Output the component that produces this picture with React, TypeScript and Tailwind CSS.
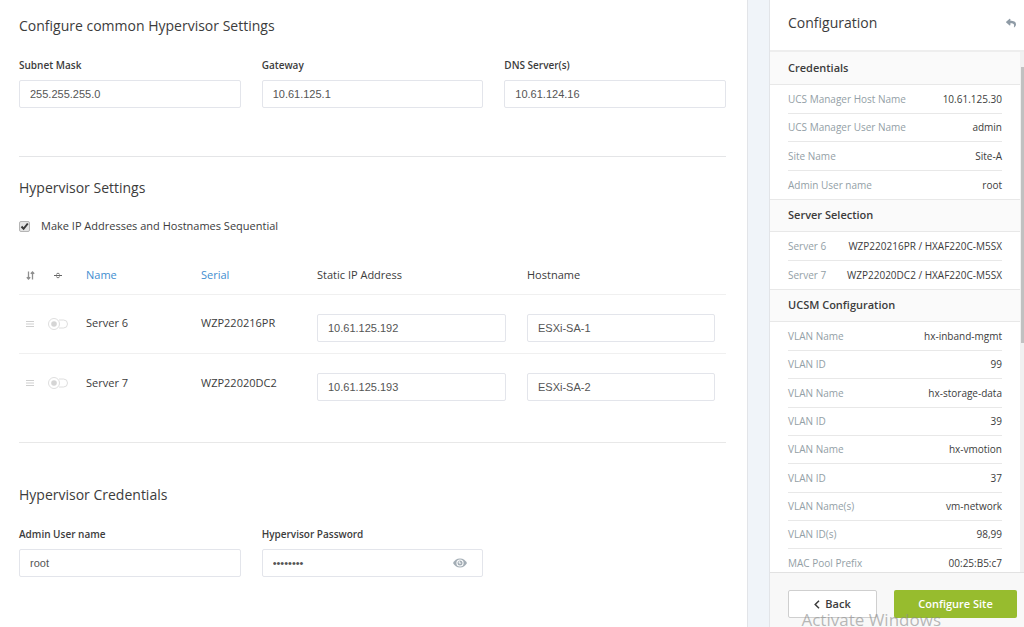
import { useState } from 'react'
import type { InputHTMLAttributes } from 'react'
import { FaReply } from 'react-icons/fa'

type Item = { label: string; value: string }

const fields: Item[] = [
  { label: 'Subnet Mask', value: '255.255.255.0' },
  { label: 'Gateway', value: '10.61.125.1' },
  { label: 'DNS Server(s)', value: '10.61.124.16' },
]

const servers = [
  { name: 'Server 6', serial: 'WZP220216PR', ip: '10.61.125.192', host: 'ESXi-SA-1' },
  { name: 'Server 7', serial: 'WZP22020DC2', ip: '10.61.125.193', host: 'ESXi-SA-2' },
]

const sections: { title: string; items: Item[] }[] = [
  {
    title: 'Credentials',
    items: [
      { label: 'UCS Manager Host Name', value: '10.61.125.30' },
      { label: 'UCS Manager User Name', value: 'admin' },
      { label: 'Site Name', value: 'Site-A' },
      { label: 'Admin User name', value: 'root' },
    ],
  },
  {
    title: 'Server Selection',
    items: [
      { label: 'Server 6', value: 'WZP220216PR / HXAF220C-M5SX' },
      { label: 'Server 7', value: 'WZP22020DC2 / HXAF220C-M5SX' },
    ],
  },
  {
    title: 'UCSM Configuration',
    items: [
      { label: 'VLAN Name', value: 'hx-inband-mgmt' },
      { label: 'VLAN ID', value: '99' },
      { label: 'VLAN Name', value: 'hx-storage-data' },
      { label: 'VLAN ID', value: '39' },
      { label: 'VLAN Name', value: 'hx-vmotion' },
      { label: 'VLAN ID', value: '37' },
      { label: 'VLAN Name(s)', value: 'vm-network' },
      { label: 'VLAN ID(s)', value: '98,99' },
      { label: 'MAC Pool Prefix', value: '00:25:B5:c7' },
    ],
  },
]

function TextInput(props: InputHTMLAttributes<HTMLInputElement>) {
  return (
    <input
      {...props}
      className="block w-full h-[28px] px-[10px] rounded-xs border border-[#e3e5eb] bg-white font-['Liberation_Sans',sans-serif] text-[11px] text-[#555] outline-none focus:border-[#4a90c8]"
    />
  )
}

function Field({ id, label, value }: { id: string; label: string; value: string }) {
  return (
    <div>
      <label htmlFor={id} className="block mb-[7px] text-[10px] leading-4 font-semibold">
        {label}
      </label>
      <TextInput id={id} defaultValue={value} />
    </div>
  )
}

function Toggle({ label }: { label: string }) {
  return (
    <label className="relative flex items-center w-5 h-3 cursor-pointer">
      <input type="checkbox" aria-label={label} className="sr-only" />
      <svg viewBox="0 0 20 12" className="w-5 h-3" fill="none" stroke="#dedede">
        <path d="M11 2h4.500a4 4 0 0 1 0 8h-4.500" />
        <circle cx="6" cy="6" r="5.500" />
        <circle cx="6" cy="6" r="2.800" fill="#d5d5d5" stroke="none" />
      </svg>
    </label>
  )
}

function ServerTable() {
  return (
    <table className="w-full table-fixed text-left text-[11px]">
      <colgroup>
        <col className="w-[29px]" />
        <col className="w-[38px]" />
        <col className="w-[115px]" />
        <col className="w-[116px]" />
        <col className="w-[210px]" />
        <col />
      </colgroup>
      <thead>
        <tr className="h-[37px] border-b border-[#f0f0f0]">
          <th className="pl-[7px]">
            <svg viewBox="0 0 9 9" className="w-[9px] h-[9px]" fill="none" stroke="#8f8f8f" aria-label="Order">
              <path strokeWidth="1.300" d="M2.500 .5v7M.8 6.200l1.700 1.800 1.700-1.800M6.500 8.500v-7M4.800 2.800l1.700-1.800 1.700 1.800" />
            </svg>
          </th>
          <th className="pl-[6px]">
            <svg viewBox="0 0 8 7" className="w-2 h-[7px]" fill="none" stroke="#666" aria-label="Enable">
              <path d="M0 3.500h8" />
              <path strokeWidth=".9" d="M2.200 2.400 4 1l1.800 1.400M2.200 4.600 4 6l1.800-1.400" />
            </svg>
          </th>
          <th className="font-normal">
            <a href="#name" className="text-[#3f8ed0]">Name</a>
          </th>
          <th className="font-normal">
            <a href="#serial" className="text-[#3f8ed0]">Serial</a>
          </th>
          <th className="font-normal">Static IP Address</th>
          <th className="font-normal">Hostname</th>
        </tr>
      </thead>
      <tbody>
        {servers.map((s) => (
          <tr key={s.name} className="h-[59px] border-b border-[#f0f0f0] last:border-0">
            <td className="pl-[7px]">
              <svg viewBox="0 0 8 6" className="w-2 h-[6px]" stroke="#cfcfcf">
                <path d="M0 .5h8M0 3h8M0 5.500h8" />
              </svg>
            </td>
            <td>
              <Toggle label={`Enable ${s.name}`} />
            </td>
            <td>{s.name}</td>
            <td>{s.serial}</td>
            <td className="pt-2 pr-[21px]">
              <TextInput aria-label={`${s.name} static IP address`} defaultValue={s.ip} />
            </td>
            <td className="pt-2 pr-[11px]">
              <TextInput aria-label={`${s.name} hostname`} defaultValue={s.host} />
            </td>
          </tr>
        ))}
      </tbody>
    </table>
  )
}

function PasswordField() {
  const [shown, setShown] = useState(false)
  return (
    <div>
      <label htmlFor="password" className="block mb-[7px] text-[10px] leading-4 font-semibold">
        Hypervisor Password
      </label>
      <div className="relative">
        <TextInput id="password" type={shown ? 'text' : 'password'} defaultValue="password" />
        <button
          type="button"
          aria-label="Show password"
          onClick={() => setShown(!shown)}
          className="absolute inset-y-0 right-4 flex items-center"
        >
          <svg viewBox="0 0 14 10" className="w-[14px] h-[10px]">
            <path fill="#a3adb5" d="M7 .5C3.800.5 1.400 2.500 0 5c1.400 2.500 3.800 4.500 7 4.500s5.600-2 7-4.500C12.600 2.500 10.200.5 7 .5z" />
            <circle cx="7" cy="5" r="3.600" fill="#fff" />
            <circle cx="7" cy="5" r="2.500" fill="#a3adb5" />
            <path d="M6.200 3.200v1.900h1.900" fill="none" stroke="#fff" />
          </svg>
        </button>
      </div>
    </div>
  )
}

function Sidebar() {
  return (
    <aside className="flex flex-col w-[255px] shrink-0 border-l border-[#e2e4e8] bg-white">
      <header className="flex items-center justify-between h-[52px] shrink-0 pl-[18px] pr-2 pb-1 border-b-2 border-[#eeeeee]">
        <h2 className="text-[14px] leading-5">Configuration</h2>
        <button type="button" aria-label="Collapse">
          <FaReply className="w-[10px] h-[10px] text-[#8f9ba6]" />
        </button>
      </header>

      <div className="flex flex-1 min-h-0">
        <div className="flex-1 overflow-hidden">
          {sections.map((section) => (
            <section key={section.title} className="group">
              <h3 className="flex items-center h-[33px] pl-[18px] border-y border-[#e8e8e8] bg-[#fafafa] text-[11px] font-semibold group-first:border-t-0">
                {section.title}
              </h3>
              <dl className="pt-px px-[18px] text-[10px]">
                {section.items.map((item, i) => (
                  <div
                    key={i}
                    className="flex items-center justify-between h-[28px] nth-[3n]:h-[29px] border-b border-[#e8e8e8] last:border-0"
                  >
                    <dt className="text-[#93a0a6]">{item.label}</dt>
                    <dd>{item.value}</dd>
                  </div>
                ))}
              </dl>
            </section>
          ))}
        </div>
        <div className="w-1 pt-[15px] bg-[#f1f1f1]">
          <div className="h-[276px] ml-px bg-[#c1c1c1]" />
        </div>
      </div>

      <footer className="flex gap-[17px] h-[55px] shrink-0 pt-[17px] pl-[18px] pr-[7px] border-t border-[#e2e2e2] bg-[#f8f8f8] text-[11px] font-semibold">
        <button
          type="button"
          className="flex items-center justify-center gap-[5px] w-[89px] h-[28px] rounded-xs border border-[#cfcfcf] bg-white"
        >
          <svg viewBox="0 0 6 9" className="w-[6px] h-[9px]" fill="none" stroke="currentColor" strokeWidth="1.500">
            <path d="M5 .7 1.200 4.500 5 8.300" />
          </svg>
          Back
        </button>
        <button type="button" className="flex-1 h-[28px] rounded-xs bg-[#97bc2e] text-white">
          Configure Site
        </button>
      </footer>
    </aside>
  )
}

export default function App() {
  return (
    <div className="relative flex h-screen overflow-hidden bg-[#f0f4f9] font-['Open_Sans',sans-serif] text-[#3c3c3c]">
      <main className="flex-1 min-w-0 mr-[21px] pl-[19px] pr-[21px] pt-4 border-r border-[#e2e4e8] bg-white">
        <section className="pb-12 border-b border-[#e4e5e7]">
          <h2 className="text-[14px] leading-5">Configure common Hypervisor Settings</h2>
          <div className="grid grid-cols-3 gap-[21px] mt-[21px]">
            {fields.map((f) => (
              <Field key={f.label} id={f.label} label={f.label} value={f.value} />
            ))}
          </div>
        </section>

        <section className="pt-[21px] pb-[30px] border-b border-[#e8e8e8]">
          <h2 className="text-[14px] leading-5">Hypervisor Settings</h2>
          <label className="flex items-center gap-[11px] mt-5 mb-[23px] text-[11px] leading-4">
            <span className="relative flex w-[11px] h-[11px]">
              <input
                type="checkbox"
                defaultChecked
                className="peer appearance-none w-[11px] h-[11px] rounded-xs border border-[#b5b5b5] bg-[#e4e4e4]"
              />
              <svg
                viewBox="0 0 11 11"
                className="absolute inset-0 hidden peer-checked:block pointer-events-none"
                fill="none"
                stroke="#3a3a3a"
                strokeWidth="2"
              >
                <path d="M2.500 5.500 4.600 7.800 8.800 2.500" />
              </svg>
            </span>
            Make IP Addresses and Hostnames Sequential
          </label>
          <ServerTable />
        </section>

        <section className="pt-[42px]">
          <h2 className="text-[14px] leading-5">Hypervisor Credentials</h2>
          <div className="grid grid-cols-3 gap-[21px] mt-[21px]">
            <Field id="admin" label="Admin User name" value="root" />
            <PasswordField />
          </div>
        </section>
      </main>

      <Sidebar />

      <p className="absolute right-[83px] bottom-0 text-[17px] leading-[14px] text-[#8a8a8a]/60 pointer-events-none">
        Activate Windows
      </p>
    </div>
  )
}
